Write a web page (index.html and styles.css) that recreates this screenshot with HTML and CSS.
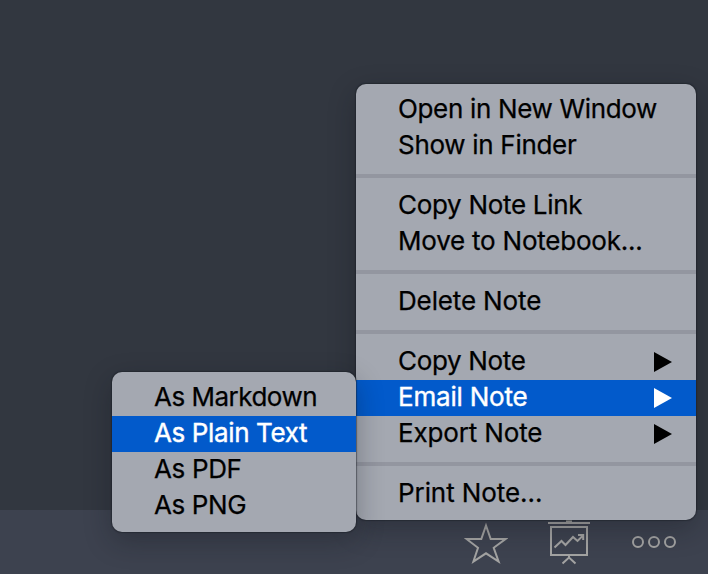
FILE: index.html
```html
<!DOCTYPE html>
<html lang="en">
<head>
<meta charset="utf-8">
<title>Note menu</title>
<link rel="stylesheet" href="styles.css">
</head>
<body>
<main class="editor"></main>
<footer class="toolbar">
  <svg class="icon" width="44" height="44" viewBox="464 522 44 44"><path d="M486 525.500 L490.700 539 H505.500 L493.700 547.800 L498.600 561.500 L486 553.300 L473.400 561.500 L478 547.800 L466.500 539 H481.300 Z"/></svg>
  <svg class="icon" width="44" height="48" viewBox="547 518 44 48"><path d="M548 523H590M551 527H587V555H551ZM569 556V558M562.500 563.500L569 557.500L575.500 563.500M554.500 547.500L561.500 541L565.500 545L573 537L577.500 541L583 535.500M578 535H583.200V540"/><path d="M566 521H572"/></svg>
  <svg class="icon" width="48" height="16" viewBox="630 534 48 16"><circle cx="638" cy="542" r="5"/><circle cx="654" cy="542" r="5"/><circle cx="670" cy="542" r="5"/></svg>
</footer>
<nav class="menu note-menu">
  <div class="item open">Open in New Window</div>
  <div class="item show">Show in Finder</div>
  <hr>
  <div class="item link">Copy Note Link</div>
  <div class="item move">Move to Notebook...</div>
  <hr>
  <div class="item delete">Delete Note</div>
  <hr>
  <div class="item copy">Copy Note<i class="arrow"></i></div>
  <div class="item email selected">Email Note<i class="arrow"></i></div>
  <div class="item export">Export Note<i class="arrow"></i></div>
  <hr>
  <div class="item print">Print Note...</div>
</nav>
<nav class="menu email-menu">
  <div class="item markdown">As Markdown</div>
  <div class="item plain selected">As Plain Text</div>
  <div class="item pdf">As PDF</div>
  <div class="item png">As PNG</div>
</nav>
</body>
</html>
```
FILE: styles.css
```css
* { box-sizing: border-box; }
body {
  margin: 0;
  height: 574px;
  display: flex;
  flex-direction: column;
  overflow: hidden;
  background: #323740;
  font-family: Inter, "Liberation Sans", sans-serif;
}
.editor { flex: 1; }
.toolbar {
  height: 64px;
  padding: 8px 30px 0 0;
  display: flex;
  justify-content: flex-end;
  align-items: flex-start;
  background: #3d424f;
}
.icon { fill: none; stroke: #a3a3a2; stroke-width: 2; }
.icon:nth-child(1) { margin: 4px 39px 0 0; }
.icon:nth-child(2) { margin-right: 39px; }
.icon:nth-child(3) { margin-top: 16px; }
.menu {
  position: absolute;
  padding: 8px 0;
  border-radius: 10px;
  background: #a4a8b1;
  box-shadow: 0 0 1px 1px rgba(25, 28, 35, .45), 0 9px 28px rgba(15, 18, 25, .32);
}
.note-menu { left: 356px; top: 84px; width: 340px; }
.email-menu { left: 112px; top: 372px; width: 244px; }
.item {
  height: 36px;
  padding: 0 24px 2px 42px;
  display: flex;
  align-items: center;
  justify-content: space-between;
  color: #000;
  font-size: 26px;
  line-height: 34px;
  white-space: nowrap;
  -webkit-text-stroke: .25px currentColor;
}
.selected { background: #025acb; color: #fff; -webkit-text-stroke-width: .4px; }
.open { letter-spacing: -.34px; }
.show, .link { letter-spacing: -.3px; }
.move { letter-spacing: -.22px; }
.delete, .export { letter-spacing: -.14px; }
.copy { letter-spacing: -.33px; }
.email { letter-spacing: -.2px; }
.print { letter-spacing: -.08px; }
.markdown { letter-spacing: -.5px; }
.plain { letter-spacing: -.37px; }
.pdf { letter-spacing: -.35px; }
.png { letter-spacing: -.4px; }
.arrow {
  position: relative;
  top: 1px;
  width: 18px;
  height: 20px;
  background: currentColor;
  clip-path: polygon(0 0, 100% 50%, 0 100%);
}
hr {
  height: 4px;
  margin: 10px 0;
  border: 0;
  background: #9396a0;
}
```
